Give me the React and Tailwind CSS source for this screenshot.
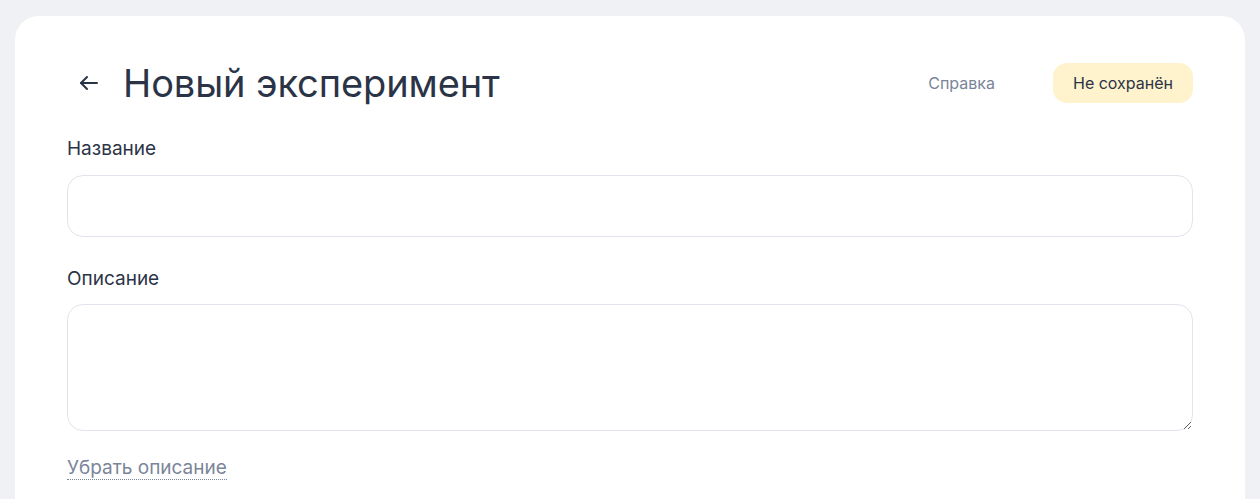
import React from 'react';

function BackArrow() {
  return (
    <svg width="24" height="24" viewBox="0 0 24 24" fill="none" stroke="currentColor" strokeWidth="2" strokeLinecap="round" strokeLinejoin="round">
      <path d="M20 12H4" />
      <path d="M10 6l-6 6 6 6" />
    </svg>
  );
}

export default function App() {
  return (
    <div className="min-h-[499px] h-[499px] overflow-hidden bg-[#f0f1f5] pt-4 px-[15px] font-['Inter',sans-serif]">
      <div className="bg-white rounded-t-[24px] px-[52px] pt-[42px] h-[600px]">
        {/* Header */}
        <div className="flex items-center h-[50px]">
          <button className="text-[#2b3446] mr-[22px] ml-[10px] flex items-center">
            <BackArrow />
          </button>
          <h1 className="text-[38px] leading-[50px] text-[#2b3446] tracking-[-0.1px]">Новый эксперимент</h1>
          <div className="ml-auto flex items-center">
            <a className="text-[16px] text-[#7a8599] mr-[58px]">Справка</a>
            <span className="h-[40px] px-5 rounded-[14px] bg-[#fef3cd] text-[16px] text-[#2b3446] flex items-center">Не сохранён</span>
          </div>
        </div>

        {/* Name */}
        <label className="block mt-[27px] text-[19px] leading-[28px] text-[#2b3446]">Название</label>
        <input className="mt-[12px] w-full h-[62px] rounded-[16px] border border-[#e2e4ec] px-4 outline-none" />

        {/* Description */}
        <label className="block mt-[28px] text-[19px] leading-[28px] text-[#2b3446]">Описание</label>
        <textarea className="block mt-[11px] w-full h-[127px] rounded-[16px] border border-[#e2e4ec] px-4 py-3 outline-none" />

        <button className="mt-[26px] text-[19px] leading-[22px] text-[#7a8599] border-b border-dotted border-[#7a8599]">
          Убрать описание
        </button>
      </div>
    </div>
  );
}
